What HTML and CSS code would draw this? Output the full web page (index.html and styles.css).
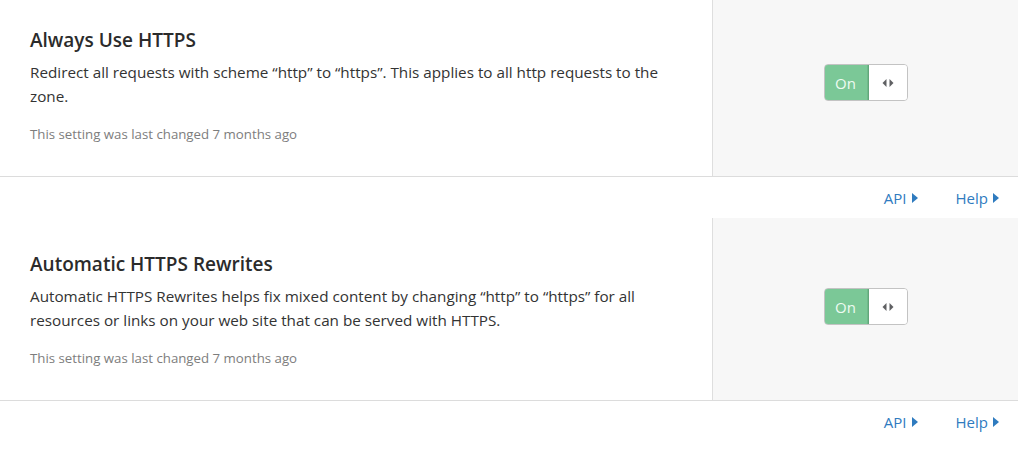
FILE: index.html
```html
<!DOCTYPE html>
<html lang="en">
<head>
<meta charset="utf-8">
<title>SSL settings</title>
<link rel="stylesheet" href="styles.css">
</head>
<body>
<div class="page">
  <section class="card">
    <div class="card-main">
      <h3 class="card-title">Always Use HTTPS</h3>
      <p class="card-desc">Redirect all requests with scheme “http” to “https”. This applies to all http requests to the zone.</p>
      <p class="card-meta">This setting was last changed 7 months ago</p>
    </div>
    <div class="card-control">
      <div class="toggle">
        <span class="toggle-label">On</span>
        <span class="toggle-knob">
          <svg width="12" height="8" viewBox="0 0 12 8"><path d="M4.5 0 L0.5 4 L4.5 8 Z M7.5 0 L11.5 4 L7.5 8 Z" fill="#5f6063"/></svg>
        </span>
      </div>
    </div>
  </section>
  <div class="card-footer">
    <a class="footer-link" href="#">API<span class="caret"></span></a>
    <a class="footer-link" href="#">Help<span class="caret"></span></a>
  </div>
  <section class="card">
    <div class="card-main">
      <h3 class="card-title">Automatic HTTPS Rewrites</h3>
      <p class="card-desc">Automatic HTTPS Rewrites helps fix mixed content by changing “http” to “https” for all resources or links on your web site that can be served with HTTPS.</p>
      <p class="card-meta">This setting was last changed 7 months ago</p>
    </div>
    <div class="card-control">
      <div class="toggle">
        <span class="toggle-label">On</span>
        <span class="toggle-knob">
          <svg width="12" height="8" viewBox="0 0 12 8"><path d="M4.5 0 L0.5 4 L4.5 8 Z M7.5 0 L11.5 4 L7.5 8 Z" fill="#5f6063"/></svg>
        </span>
      </div>
    </div>
  </section>
  <div class="card-footer">
    <a class="footer-link" href="#">API<span class="caret"></span></a>
    <a class="footer-link" href="#">Help<span class="caret"></span></a>
  </div>
</div>
</body>
</html>
```

FILE: styles.css
```css
html, body {
  margin: 0;
  padding: 0;
  background: #ffffff;
}
body {
  font-family: "Open Sans", "Noto Sans", "Liberation Sans", sans-serif;
  color: #333333;
  overflow: hidden;
}
.page {
  margin-top: -6px;
}
.card {
  display: flex;
  height: 182px;
  border-bottom: 1px solid #dcdcdc;
}
.card-main {
  flex: 1;
  padding: 34px 30px 0 30px;
  box-sizing: border-box;
}
.card-title {
  margin: 0;
  font-size: 19px;
  line-height: 24px;
  font-weight: 600;
  color: #2b2b2b;
}
.card-desc {
  margin: 8px 0 0 0;
  font-size: 15.25px;
  line-height: 24px;
  color: #333333;
}
.card-meta {
  margin: 16px 0 0 0;
  font-size: 13.25px;
  line-height: 20px;
  color: #7d7d7d;
}
.card-control {
  width: 306px;
  flex: none;
  background: #f7f7f7;
  border-left: 1px solid #dedede;
  display: flex;
  align-items: center;
  justify-content: center;
  padding-bottom: 5px;
  box-sizing: border-box;
}
.toggle {
  display: flex;
  height: 37px;
  width: 84px;
  box-sizing: border-box;
  border-radius: 4px;
  overflow: hidden;
  border: 1px solid #c3c3c3;
}
.toggle-label {
  width: 44px;
  flex: none;
  background: #7bc897;
  border-right: 1px solid #62a77b;
  margin: -1px 0 -1px -1px;
  border-radius: 4px 0 0 4px;
  box-shadow: inset 0 0 0 1px #6fb98a;
  color: #eefbf2;
  font-size: 15px;
  display: flex;
  align-items: center;
  justify-content: center;
}
.toggle-knob {
  flex: 1;
  background: #ffffff;
  display: flex;
  align-items: center;
  justify-content: center;
}
.card-footer {
  height: 41px;
  display: flex;
  align-items: center;
  justify-content: flex-end;
  gap: 38px;
  padding-right: 19px;
}
.footer-link {
  color: #2f7bbf;
  text-decoration: none;
  font-size: 15px;
  display: flex;
  align-items: center;
}
.caret {
  display: inline-block;
  width: 0;
  height: 0;
  margin-left: 5px;
  border-top: 5px solid transparent;
  border-bottom: 5px solid transparent;
  border-left: 6px solid #2f7bbf;
}
```
